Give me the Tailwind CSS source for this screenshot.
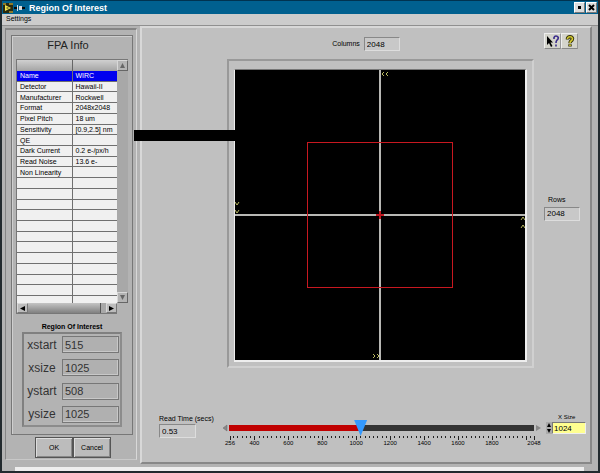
<!DOCTYPE html>
<html lang="en">
<head>
  <meta charset="UTF-8" />
  <meta name="viewport" content="width=device-width, initial-scale=1.0"/>
  <title>Region Of Interest</title>
  <script src="https://cdn.jsdelivr.net/npm/@tailwindcss/browser@4"></script>
</head>
<body class="min-h-screen flex flex-col bg-[#b3b3b3] border-x-2 border-b-2 border-[#222a2e] text-black text-[7px] leading-[10px] font-['Liberation_Sans',Arial,sans-serif]">

  <!-- TITLE BAR -->
  <header class="flex items-center h-[14px] pl-px pr-px bg-[#00608f] border-t border-[#003350] text-white">
    <svg class="w-[22px] h-[10px] shrink-0" viewBox="0 0 22 10" aria-hidden="true">
      <rect width="10" height="10" fill="#2a2a10"/>
      <path d="M0 0h3v2H0zM6 0h4v2H6zM6 8h4v2H6z" fill="#8f7a28"/>
      <path d="M2 2l6 3-6 3z" fill="#f4e84a"/>
      <path d="M3.500 5h2" stroke="#222"/>
      <path d="M11 5h4M18 5h4" stroke="#0a0a0a" stroke-width="2"/>
      <path d="M14.500 2v6" stroke="#ddd"/>
      <rect x="16" y="3" width="3" height="4" fill="#ddd"/>
    </svg>
    <h1 class="ml-1 text-[9px] font-bold grow">Region Of Interest</h1>
    <button type="button" aria-label="Maximize" class="w-[11px] h-[11px] mr-px flex items-center justify-center bg-[#dcdcdc] border border-white border-r-[#777] border-b-[#777]">
      <span class="size-[3px] bg-black"></span>
    </button>
    <button type="button" aria-label="Close" class="w-[11px] h-[11px] flex items-center justify-center bg-[#dcdcdc] border border-white border-r-[#777] border-b-[#777]">
      <svg class="size-[7px]" viewBox="0 0 7 7"><path d="M1 1l5 5M6 1l-5 5" stroke="#000" stroke-width="2"/></svg>
    </button>
  </header>

  <!-- MENU -->
  <nav class="h-[12px] pl-1 bg-[#cccccc] border-b border-[#909090]">
    <a href="#">Settings</a>
  </nav>

  <main class="grow flex pl-[3px] pr-[6px] gap-[3px]">

    <!-- LEFT COLUMN -->
    <section class="w-[132px] shrink-0 mt-[2px] mb-1 pl-[5px] pr-[3px] pt-[5px] border-t-2 border-l border-t-[#858585] border-l-[#858585] border-r border-r-[#d8d8d8] border-b border-b-[#c8c8c8]">
      <div class="h-[400px] px-1 border border-[#777] shadow-[inset_1px_1px_0_#cfcfcf]">
        <h2 class="h-[23px] pt-[3px] pr-[8px] text-center text-[11px] leading-[12px] text-[#222]">FPA Info</h2>

        <div class="flex border-t border-l border-[#777]">
          <div class="flex-1 h-[243px] overflow-hidden">
            <table class="w-full h-[247px] table-fixed border-collapse bg-[#f0f0f0] leading-[9px] whitespace-nowrap [&_td]:border-b [&_td]:border-[#707070] [&_td]:p-0 [&_td]:pl-[3px] [&_td+td]:border-l">
              <thead>
                <tr class="bg-[#b8b8b8]">
                  <th class="w-[55px] h-[11px] p-0 border-r border-[#666] bg-linear-to-b from-[#d0d0d0] to-[#a4a4a4]" aria-label="Property"></th>
                  <th class="p-0 bg-linear-to-b from-[#d0d0d0] to-[#a4a4a4]" aria-label="Value"></th>
                </tr>
              </thead>
              <tbody>
                <tr class="bg-[#0000f0] text-white"><td>Name</td><td>WIRC</td></tr>
                <tr><td>Detector</td><td>Hawaii-II</td></tr>
                <tr><td>Manufacturer</td><td>Rockwell</td></tr>
                <tr><td>Format</td><td>2048x2048</td></tr>
                <tr><td>Pixel Pitch</td><td>18 um</td></tr>
                <tr><td>Sensitivity</td><td>[0.9,2.5] nm</td></tr>
                <tr><td>QE</td><td></td></tr>
                <tr><td>Dark Current</td><td>0.2 e-/px/h</td></tr>
                <tr><td>Read Noise</td><td>13.6 e-</td></tr>
                <tr><td>Non Linearity</td><td></td></tr>
                <tr><td>&nbsp;</td><td></td></tr>
                <tr><td>&nbsp;</td><td></td></tr>
                <tr><td>&nbsp;</td><td></td></tr>
                <tr><td>&nbsp;</td><td></td></tr>
                <tr><td>&nbsp;</td><td></td></tr>
                <tr><td>&nbsp;</td><td></td></tr>
                <tr><td>&nbsp;</td><td></td></tr>
                <tr><td>&nbsp;</td><td></td></tr>
                <tr><td>&nbsp;</td><td></td></tr>
                <tr><td>&nbsp;</td><td></td></tr>
                <tr><td>&nbsp;</td><td></td></tr>
                <tr><td>&nbsp;</td><td></td></tr>
              </tbody>
            </table>
          </div>
          <!-- vertical scroll bar -->
          <div class="w-[11px] flex flex-col justify-between bg-[#a8a8a8]">
            <button type="button" aria-label="Scroll up" class="h-[11px] flex items-center justify-center bg-[#b4b4b4] border border-[#d8d8d8] border-r-[#666] border-b-[#666]">
              <svg class="size-[7px]" viewBox="0 0 7 7"><path d="M3.500 1L6 6H1z" fill="#666"/></svg>
            </button>
            <button type="button" aria-label="Scroll down" class="h-[11px] flex items-center justify-center bg-[#b4b4b4] border border-[#d8d8d8] border-r-[#666] border-b-[#666]">
              <svg class="size-[7px]" viewBox="0 0 7 7"><path d="M3.500 6L6 1H1z" fill="#666"/></svg>
            </button>
          </div>
        </div>
        <!-- horizontal scroll bar -->
        <div class="flex h-[11px] mr-[11px] border-l border-b border-[#777]">
          <button type="button" aria-label="Scroll left" class="w-[11px] flex items-center justify-center bg-[#bcbcbc] border border-[#d8d8d8] border-r-[#777] border-b-[#777]">
            <svg class="size-[7px]" viewBox="0 0 7 7"><path d="M1 3.500L6 1v5z" fill="#000"/></svg>
          </button>
          <div class="flex-1 bg-linear-to-b from-[#c4c4c4] to-[#808080] border-r border-[#555]"></div>
          <div class="w-[5px] bg-[#a8a8a8]"></div>
          <button type="button" aria-label="Scroll right" class="w-[11px] flex items-center justify-center bg-[#bcbcbc] border border-[#d8d8d8] border-r-[#777] border-b-[#777]">
            <svg class="size-[7px]" viewBox="0 0 7 7"><path d="M6 3.500L1 1v5z" fill="#000"/></svg>
          </button>
        </div>

        <h2 class="mt-[8px] text-center font-bold">Region Of Interest</h2>
        <div class="mx-[6px] h-[95px] flex flex-col justify-between pr-px py-[2px] border-2 border-[#808080] border-r-[#8c8c8c] border-b-[#8c8c8c] text-[#333]">
          <div class="flex items-center justify-between">
            <label for="xstart" class="w-[36px] text-center text-[12px]">xstart</label>
            <input id="xstart" value="515" class="w-[57px] h-[17px] pl-[2px] text-[11px] bg-[#b0b0b0] border border-[#777] shadow-[inset_-1px_-1px_0_#c8c8c8]"/>
          </div>
          <div class="flex items-center justify-between">
            <label for="xsize" class="w-[36px] text-center text-[12px]">xsize</label>
            <input id="xsize" value="1025" class="w-[57px] h-[17px] pl-[2px] text-[11px] bg-[#b0b0b0] border border-[#777] shadow-[inset_-1px_-1px_0_#c8c8c8]"/>
          </div>
          <div class="flex items-center justify-between">
            <label for="ystart" class="w-[36px] text-center text-[12px]">ystart</label>
            <input id="ystart" value="508" class="w-[57px] h-[17px] pl-[2px] text-[11px] bg-[#b0b0b0] border border-[#777] shadow-[inset_-1px_-1px_0_#c8c8c8]"/>
          </div>
          <div class="flex items-center justify-between">
            <label for="ysize" class="w-[36px] text-center text-[12px]">ysize</label>
            <input id="ysize" value="1025" class="w-[57px] h-[17px] pl-[2px] text-[11px] bg-[#b0b0b0] border border-[#777] shadow-[inset_-1px_-1px_0_#c8c8c8]"/>
          </div>
        </div>
      </div>

      <div class="flex mt-[2px] ml-6">
        <button type="button" class="w-[38px] h-[21px] bg-[#bcbcbc] border border-[#555] shadow-[inset_1px_1px_0_#ddd,inset_-1px_-1px_0_#888]">OK</button>
        <button type="button" class="w-[38px] h-[21px] bg-[#bcbcbc] border border-[#555] shadow-[inset_1px_1px_0_#ddd,inset_-1px_-1px_0_#888]">Cancel</button>
      </div>
    </section>

    <!-- RIGHT PANEL -->
    <section class="grow flex flex-col bg-[#c0c0c0] border-2 border-[#d8d8d8] border-r-[#888] border-b-[#888]">
      <div class="grid grid-cols-[1fr_auto_1fr] h-[31px] pt-[5px]">
        <div class="col-start-2 flex items-center gap-1 h-[22px]">
          <label for="columns">Columns</label>
          <input id="columns" value="2048" class="w-[36px] h-[14px] pl-[2px] text-[8px] bg-[#c8c8c8] border border-[#888] border-r-[#ddd] border-b-[#ddd]"/>
        </div>
        <div class="justify-self-end flex mr-[12px]">
          <button type="button" aria-label="Context help" class="w-[17px] h-[16px] flex items-center justify-center bg-[#d4d4cc] border border-[#eee] border-r-[#999] border-b-[#888]">
            <svg class="w-[14px] h-[13px]" viewBox="0 0 14 13">
              <path d="M1 1v9l2-2 2 4 1.500-1-2-3.500H7z" fill="#000"/>
              <path d="M8 4V2.500Q8.500 1 10 1t2.300 1.500Q12.500 4 11 5.200 10 6 10 8M10 9.500v2" fill="none" stroke="#3a2c8c" stroke-width="1.600"/>
            </svg>
          </button>
          <button type="button" aria-label="Help" class="w-[17px] h-[16px] flex items-center justify-center bg-[#d4d4cc] border border-[#eee] border-r-[#999] border-b-[#888]">
            <svg class="w-[14px] h-[13px]" viewBox="0 0 14 13" fill="none">
              <path d="M4.500 4.500V3.500Q5 1.800 7 1.800t2.500 1.700Q9.500 5 8 6 7 6.700 7 8.200M7 9.300v2.200" stroke="#333008" stroke-width="3.400"/>
              <path d="M4.500 4V3.500Q5 1.800 7 1.800t2.500 1.700Q9.500 5 8 6 7 6.700 7 8M7 9.500v1.500" stroke="#d6cc30" stroke-width="1.600"/>
            </svg>
          </button>
        </div>
      </div>

      <div class="flex items-center gap-[10px] pl-[85px] pr-[10px]">
        <!-- detector area, 2048 x 2048 -->
        <div class="relative grow p-[5px] pb-[4px] pt-[8px] border-2 border-[#999] border-r-[#d0d0d0] border-b-[#d0d0d0]">
          <svg class="block w-full border border-[#eee] border-t-[#777] border-r-2 border-b-2 bg-black" viewBox="0 0 290 290" role="img" aria-label="Region of interest">
            <path d="M145 0v290M0 145h290" stroke="#b8b8b4" stroke-width="2"/>
            <rect x="72.500" y="72.500" width="145" height="145" fill="none" stroke="#c81820"/>
            <path d="M141 145h8M145 141v8" stroke="#c01820" stroke-width="2"/>
            <g fill="none" stroke="#b8b860">
              <path d="M149 2l-2 2 2 2M153 2l-2 2 2 2"/>
              <path d="M138 284l2 2-2 2M142 284l2 2-2 2"/>
              <path d="M0 132l2 3 2-3M0 140l2 3 2-3"/>
              <path d="M286 150l2-3 2 3M286 158l2-3 2 3"/>
            </g>
          </svg>
          <span class="absolute top-[69px] right-[297px] w-[101px] h-[11px] bg-black"></span>
        </div>
        <div class="w-[36px] shrink-0 flex flex-col pb-[12px] gap-[2px]">
          <label for="rows" class="pl-1">Rows</label>
          <input id="rows" value="2048" class="w-full h-[14px] pl-[2px] text-[8px] bg-[#c8c8c8] border border-[#888] border-r-[#ddd] border-b-[#ddd]"/>
        </div>
      </div>

      <div class="flex mt-[44px] pl-[17px] pr-[4px]">
        <div class="w-[62px] shrink-0 flex flex-col pt-[2px]">
          <label for="readtime">Read Time (secs)</label>
          <input id="readtime" value="0.53" class="w-[37px] h-[14px] pl-[2px] text-[8px] bg-[#c8c8c8] border border-[#888] border-r-[#ddd] border-b-[#ddd]"/>
        </div>
        <div class="grow pt-[8px]">
          <div class="flex items-center">
            <svg class="w-[8px] h-[8px] shrink-0" viewBox="0 0 8 8"><path d="M2 4l4-3v6z" fill="#888" stroke="#666" stroke-width=".5"/></svg>
            <input type="range" min="256" max="2048" value="1024" aria-label="X Size slider" class="appearance-none grow min-w-0 h-[16px] bg-[linear-gradient(90deg,#c00000_43%,#333_43%)] bg-size-[100%_6px] bg-center bg-no-repeat [&::-webkit-slider-thumb]:appearance-none [&::-webkit-slider-thumb]:w-[13px] [&::-webkit-slider-thumb]:h-[16px] [&::-webkit-slider-thumb]:bg-[#3399ff] [&::-webkit-slider-thumb]:[clip-path:polygon(0_0,100%_0,50%_100%)]"/>
            <svg class="w-[10px] h-[8px] shrink-0" viewBox="0 0 10 8"><path d="M7 4L2 1v6z" fill="#888"/></svg>
          </div>
          <svg id="scale" class="block w-full h-[12px] overflow-visible text-[6px]" viewBox="0 0 323 12" text-anchor="middle"></svg>
        </div>
        <div class="w-[42px] shrink-0 flex flex-col items-end">
          <label for="xsz" class="w-[33px] pl-[5px] text-[6px]">X Size</label>
          <div class="flex items-center">
            <svg class="w-[6px] h-[12px]" viewBox="0 0 6 12" aria-hidden="true"><rect width="6" height="12" fill="#aaa"/><path d="M3 1l2 4H1zM3 11l2-4H1z" fill="#000"/></svg>
            <input id="xsz" value="1024" class="w-[34px] h-[12px] pl-px text-[8px] bg-[#ffff90] border border-[#777] border-r-[#eee] border-b-[#eee]"/>
          </div>
        </div>
      </div>
    </section>
  </main>

  <!-- STATUS STRIP -->
  <footer class="h-[7px] pt-[3px] pl-[13px] pr-[14px]">
    <div class="h-[4px] bg-[#eeeeee]"></div>
  </footer>

  <script>
    // scale ticks every 25, labels every 200
    const scale = document.getElementById('scale');
    const pos = v => 9 + (v - 256) / 1792 * 304;
    let out = '';
    for (let v = 275; v < 2048; v += 25) {
      const x = Math.round(pos(v));
      out += `<rect x="${x}" y="0" width="1" height="${v % 200 === 0 ? 4 : 2}" fill="#222"/>`;
    }
    for (const v of [256, 2048]) {
      out += `<rect x="${pos(v)}" y="0" width="1" height="4" fill="#222"/>`;
    }
    for (const v of [256, 400, 600, 800, 1000, 1200, 1400, 1600, 1800, 2048]) {
      out += `<text x="${pos(v)}" y="9">${v}</text>`;
    }
    scale.innerHTML = out;
  </script>
</body>
</html>
